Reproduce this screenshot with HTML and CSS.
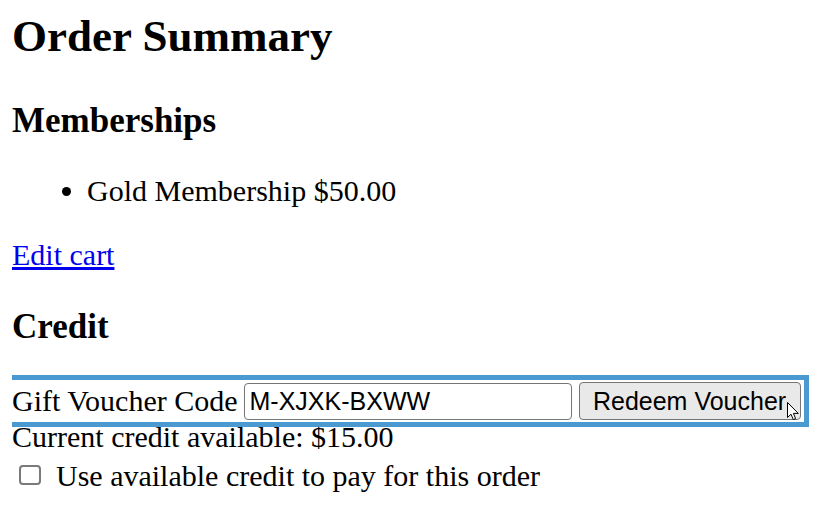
FILE: index.html
```html
<!DOCTYPE html>
<html lang="en">
<head>
<meta charset="utf-8">
<title>Order Summary</title>
<link rel="stylesheet" href="styles.css">
</head>
<body>
  <h1 class="page-title">Order Summary</h1>
  <h2 class="section-title">Memberships</h2>
  <ul class="items">
    <li>Gold Membership $50.00</li>
  </ul>
  <p class="edit"><a href="#">Edit cart</a></p>
  <h2 class="section-title">Credit</h2>
  <form class="voucher">
    <label class="voucher-label" for="code">Gift Voucher Code</label>
    <input class="voucher-input" id="code" type="text" value="M-XJXK-BXWW">
    <span class="btn-wrap">
      <button class="voucher-btn" type="button">Redeem Voucher</button>
      <svg class="cursor" width="13" height="19" viewBox="0 0 13 19" aria-hidden="true">
        <path d="M0.5 0.5 L0.5 15.5 L4 12.2 L6.3 17.6 L8.6 16.6 L6.4 11.4 L11.3 11.4 Z" fill="#fff" stroke="#000" stroke-width="1" stroke-linejoin="miter"/>
      </svg>
    </span>
  </form>
  <div class="credit">Current credit available: $15.00</div>
  <div class="use-credit">
    <input class="check" type="checkbox" id="use"><label for="use">Use available credit to pay for this order</label>
  </div>
</body>
</html>
```
FILE: styles.css
```css
html {
  background: #ffffff;
}
body {
  margin: 10px 12px 12px;
  font-family: "Liberation Serif", "Times New Roman", serif;
  font-size: 30px;
  color: #000;
}
.page-title {
  font-size: 45px;
  font-weight: bold;
  margin: 0 0 39px;
}
.section-title {
  font-size: 35px;
  font-weight: bold;
  margin: 35px 0 33px;
}
.items {
  margin: 33px 0 30px;
  padding-left: 75px;
}
.edit {
  margin: 30px 0 35px;
}
.edit a {
  color: #0000ee;
  text-decoration: underline;
}
.voucher {
  display: flex;
  align-items: center;
  width: max-content;
  height: 38px;
  margin: 35px 0 0;
  padding-right: 1px;
  outline: 5px solid #4a9ad1;
  outline-offset: 2px;
}
.voucher-label {
  white-space: nowrap;
}
.voucher-input {
  box-sizing: border-box;
  width: 328px;
  height: 37px;
  margin: 0 0 0 6px;
  padding: 0 5px;
  border: 1px solid #767676;
  border-radius: 4px;
  font-family: "Liberation Sans", Arial, sans-serif;
  font-size: 25px;
  color: #000;
  background: #fff;
}
.btn-wrap {
  position: relative;
  display: flex;
  margin-left: 7px;
}
.voucher-btn {
  box-sizing: border-box;
  width: 222px;
  height: 38px;
  margin: 0;
  padding: 0;
  border: 1px solid #767676;
  border-radius: 4px;
  background: #e9e9e9;
  font-family: "Liberation Sans", Arial, sans-serif;
  font-size: 25px;
  color: #000;
}
.cursor {
  position: absolute;
  left: 208px;
  top: 20px;
}
.credit {
  line-height: normal;
}
.use-credit {
  margin-top: 5px;
}
.check {
  appearance: none;
  -webkit-appearance: none;
  box-sizing: border-box;
  width: 22px;
  height: 20px;
  margin: 6px 15px 0 7px;
  vertical-align: top;
  border: 2px solid #7a7a7a;
  border-radius: 4px;
  background: #fff;
}
```
